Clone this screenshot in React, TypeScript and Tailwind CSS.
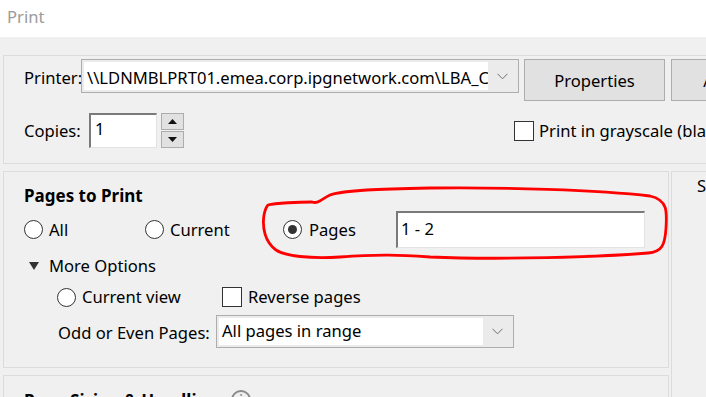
import React from "react"

function Radio({ checked = false }: { checked?: boolean }) {
  return (
    <span className="flex-shrink-0 w-[19px] h-[19px] rounded-full border border-[#333333] bg-white flex items-center justify-center">
      {checked && <span className="w-[9px] h-[9px] rounded-full bg-[#333333]" />}
    </span>
  )
}

function Checkbox() {
  return <span className="flex-shrink-0 w-[20px] h-[20px] border border-[#333333] bg-white" />
}

function Chevron() {
  return (
    <svg width="11" height="7" viewBox="0 0 11 7" className="text-[#6d6d6d]">
      <path d="M0.5 0.8 L5.5 5.8 L10.5 0.8" fill="none" stroke="currentColor" strokeWidth="1" />
    </svg>
  )
}

function Combo({ text, width, height, textPad = "" }: { text: string; width: string; height: string; textPad?: string }) {
  return (
    <div className={`${width} ${height} border border-[#adadad] bg-[#ebebeb] flex items-stretch p-[2px]`}>
      <div className={`flex-1 bg-white flex items-center pl-[3px] overflow-hidden whitespace-nowrap ${textPad}`}>{text}</div>
      <div className="w-[28px] flex items-center justify-center">
        <Chevron />
      </div>
    </div>
  )
}

export default function App() {
  return (
    <div className="relative w-[706px] h-[397px] overflow-hidden bg-[#f0f0f0] text-black text-[16.6px] leading-none font-['Noto_Sans',sans-serif]">
      {/* title bar */}
      <div className="h-[37px] bg-white flex items-center pl-[7px] pb-[2px] text-[#9b9b9b] text-[16.6px]">Print</div>

      <div className="pt-[18px] pl-[3px]">
        {/* printer group */}
        <div className="w-[820px] h-[109px] border border-[#dcdcdc] pt-[3px] pl-[20px]">
          <div className="flex items-start">
            <div className="w-[57px] h-[34px] flex items-center whitespace-nowrap pt-[5px]">Printer:</div>
            <Combo text="\\LDNMBLPRT01.emea.corp.ipgnetwork.com\LBA_Color" width="w-[438px]" height="h-[34px]" textPad="pt-[4px]" />
            <button className="ml-[5px] w-[141px] h-[42px] bg-[#e1e1e1] border border-[#adadad] pt-[2px]">Properties</button>
            <button className="ml-[6px] w-[141px] h-[42px] bg-[#e1e1e1] border border-[#adadad] pt-[2px]">Advanced</button>
          </div>
          <div className="flex items-start mt-[12px]">
            <div className="w-[65px] h-[35px] flex items-center pt-[1px]">Copies:</div>
            <div className="w-[68px] h-[35px] bg-white border-t-2 border-l-2 border-t-[#7a7a7a] border-l-[#7a7a7a] border-r border-b border-r-[#e3e3e3] border-b-[#e3e3e3] pl-[4px] pt-[6px]">1</div>
            <div className="ml-[4px] w-[23px] h-[35px] flex flex-col gap-[1px]">
              <div className="h-[17px] bg-[#e1e1e1] border border-[#adadad] flex items-center justify-center">
                <svg width="9" height="5" viewBox="0 0 9 5"><path d="M4.5 0 L9 5 L0 5 Z" fill="#111" /></svg>
              </div>
              <div className="h-[17px] bg-[#e1e1e1] border border-[#adadad] flex items-center justify-center">
                <svg width="9" height="5" viewBox="0 0 9 5"><path d="M0 0 L9 0 L4.5 5 Z" fill="#111" /></svg>
              </div>
            </div>
            <div className="ml-[330px] mt-[8px] flex items-center gap-[5px] whitespace-nowrap">
              <Checkbox />
              <span className="pt-[1px]">Print in grayscale (black and white)</span>
            </div>
          </div>
        </div>

        <div className="flex mt-[7px] gap-[2px]">
          <div className="w-[666px] flex-shrink-0 flex flex-col gap-[7px]">
            {/* pages to print */}
            <div className="h-[197px] border border-[#dcdcdc] pl-[20px]">
              <div className="mt-[11px] h-[24px] flex items-center font-bold text-[17px]">Pages to Print</div>
              <div className="mt-[4px] h-[37px] flex items-center">
                <div className="w-[121px] flex items-center gap-[6px]">
                  <Radio />
                  <span className="pt-[1px]">All</span>
                </div>
                <div className="w-[138px] flex items-center gap-[6px]">
                  <Radio />
                  <span className="pt-[1px]">Current</span>
                </div>
                <div className="w-[113px] flex items-center gap-[7px]">
                  <Radio checked />
                  <span className="pt-[1px]">Pages</span>
                </div>
                <div className="w-[249px] h-[37px] bg-white border-t-2 border-l-2 border-t-[#7a7a7a] border-l-[#7a7a7a] border-r border-b border-r-[#e3e3e3] border-b-[#e3e3e3] flex items-center pl-[3px] pb-[2px]">
                  1 - 2
                </div>
              </div>
              <div className="mt-[6px] h-[24px] flex items-center">
                <svg width="10" height="8" viewBox="0 0 10 8" className="ml-[5px] mr-[10px]">
                  <path d="M0 0 L10 0 L5 8 Z" fill="#333" />
                </svg>
                <span>More Options</span>
              </div>
              <div className="mt-[7px] h-[24px] flex items-center pl-[33px]">
                <div className="w-[165px] flex items-center gap-[6px]">
                  <Radio />
                  <span>Current view</span>
                </div>
                <div className="flex items-center gap-[6px]">
                  <Checkbox />
                  <span>Reverse pages</span>
                </div>
              </div>
              <div className="mt-[6px] flex items-center pl-[34px]">
                <div className="w-[158px] whitespace-nowrap pt-[3px]">Odd or Even Pages:</div>
                <Combo text="All pages in range" width="w-[298px]" height="h-[33px]" />
              </div>
            </div>

            {/* page sizing */}
            <div className="h-[80px] border border-[#dcdcdc] pl-[20px]">
              <div className="mt-[12px] h-[24px] flex items-center font-bold text-[17px]">
                <span className="w-[207px] whitespace-nowrap">Page Sizing &amp; Handling</span>
                <span className="w-[20px] h-[20px] rounded-full border-2 border-[#8a8a8a] flex items-center justify-center text-[#8a8a8a] text-[12px] font-bold">i</span>
              </div>
            </div>
          </div>

          <div className="flex-1 h-[260px] border border-[#dcdcdc] pl-[25px] pt-[2px]">
            <div className="h-[24px] flex items-center whitespace-nowrap">Scale: 100%</div>
          </div>
        </div>
      </div>

      {/* red hand-drawn annotation */}
      <svg className="absolute left-0 top-0 pointer-events-none" width="706" height="397" viewBox="0 0 706 397">
        <path
          d="M268 205 C275 203 300 202 312 202 C318 204 320 200 330 195 C345 190 380 189 430 188 C500 187 600 190 650 196 C668 200 667 212 666 228 C665 245 662 252 648 253 C600 257 500 260 430 257 C400 255 380 254 340 257 C310 259 285 256 276 250 C265 242 262 228 264 215 C265 210 266 207 268 205 Z"
          fill="none"
          stroke="#ff0000"
          strokeWidth="2.8"
          strokeLinejoin="round"
        />
      </svg>
    </div>
  )
}
